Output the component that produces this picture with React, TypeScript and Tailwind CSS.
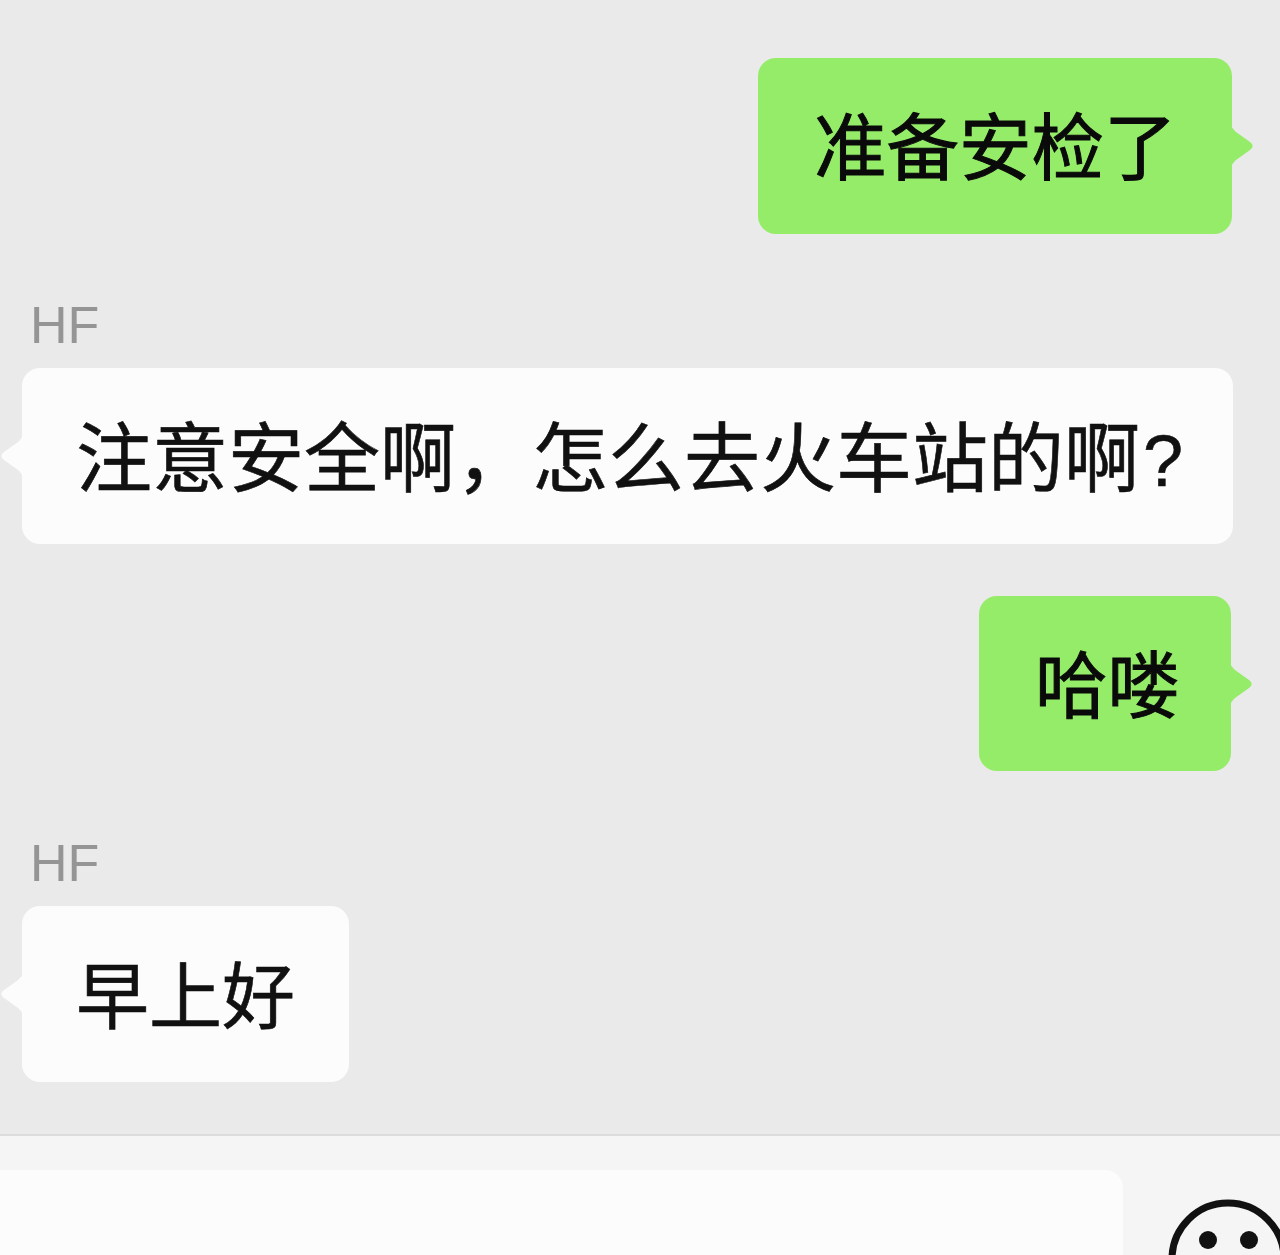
const CJK_FONT = "font-['Noto_Sans_CJK_SC',sans-serif]";

const Tail = ({ side, color }: { side: 'left' | 'right'; color: string }) => (
  <svg
    width="24"
    height="50"
    viewBox="0 0 24 50"
    className={`absolute top-[63px] ${side === 'right' ? 'right-[-22px]' : 'left-[-22px] -scale-x-100'}`}
  >
    <path d="M0 0 C1 6 3 8 6 11 L20 21 C23.500 23.500 23.500 26.500 20 29 L6 39 C3 42 1 44 0 50 Z" fill={color} />
  </svg>
);

const SentBubble = ({ text, width, className }: { text: string; width: string; className: string }) => (
  <div className={`relative flex h-[176px] items-center rounded-[18px] bg-[#95ec69] pb-[5px] ${width} ${className}`}>
    <span className="whitespace-nowrap text-[72.5px] leading-none text-[#0a0a0a] [-webkit-text-stroke:1px_#0a0a0a]">{text}</span>
    <Tail side="right" color="#95ec69" />
  </div>
);

const ReceivedBubble = ({ text, size, className, children }: { text: string; size: string; className: string; children?: React.ReactNode }) => (
  <div className={`relative flex h-[176px] items-center rounded-[18px] bg-[#fcfcfc] pl-[54px] ${className}`}>
    <span className={`whitespace-nowrap leading-none text-[#111111] [-webkit-text-stroke:0.6px_#111111] ${size}`}>
      {text}
      {children}
    </span>
    <Tail side="left" color="#fcfcfc" />
  </div>
);

const SenderName = ({ className }: { className: string }) => (
  <div className={`pl-[30px] font-['Liberation_Sans',sans-serif] text-[52px] leading-[54px] text-[#959595] ${className}`}>
    HF
  </div>
);

const App = () => {
  return (
    <div className={`flex h-[1255px] w-[1280px] flex-col overflow-hidden bg-[#eaeaea] ${CJK_FONT}`}>
      <div className="flex h-[1134px] shrink-0 flex-col pt-[58px]">
        <div className="flex justify-end pr-[48px]">
          <SentBubble text="准备安检了" width="w-[474px] pl-[56px]" className="" />
        </div>
        <SenderName className="mt-[64px]" />
        <div className="pl-[22px]">
          <ReceivedBubble text="注意安全啊，怎么去火车站的啊" size="text-[76px] pb-[1px]" className="mt-[16px] w-[1211px]">
            <span className="ml-[3px] font-['Liberation_Sans',sans-serif] text-[72px]">?</span>
          </ReceivedBubble>
        </div>
        <div className="flex justify-end pr-[49px]">
          <SentBubble text="哈喽" width="w-[252px] pl-[56px]" className="mt-[52px] !h-[175px]" />
        </div>
        <SenderName className="mt-[65px]" />
        <div className="pl-[22px]">
          <ReceivedBubble text="早上好" size="text-[73px] pb-[6px]" className="mt-[16px] w-[327px]" />
        </div>
      </div>
      <div className="flex flex-1 items-start justify-between border-t-2 border-[#dcdcdc] bg-[#f5f5f5] pt-[34px]">
        <div className="h-[120px] w-[1123px] rounded-tr-[18px] bg-[#fcfcfc]" />
        <svg width="120" height="120" viewBox="0 0 120 120" className="mt-[29px] mr-[-8px] shrink-0">
          <circle cx="60" cy="60" r="56" fill="none" stroke="#111111" strokeWidth="7" />
          <circle cx="40" cy="41" r="9" fill="#111111" />
          <circle cx="81" cy="41" r="9" fill="#111111" />
        </svg>
      </div>
    </div>
  );
};

export default App;
